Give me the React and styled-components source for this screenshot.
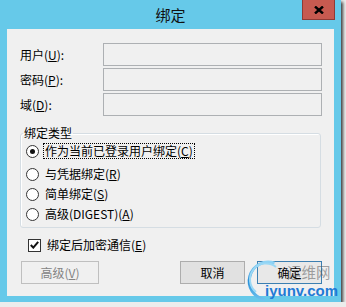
import React from "react";
import styled, { createGlobalStyle } from "styled-components";

const GlobalStyle = createGlobalStyle`
  html, body {
    margin: 0;
    padding: 0;
    background: #ececec;
  }
  body {
    font-family: "Noto Sans CJK SC", "Liberation Sans", sans-serif;
    color: #000;
  }
`;

const Window = styled.div`
  position: relative;
  width: 341px;
  height: 302px;
  background: #66c9e9;
  display: flex;
  flex-direction: column;
  box-shadow: 2px 2px 3px rgba(0, 0, 0, 0.75);
`;

const TitleBar = styled.div`
  height: 29px;
  display: grid;
  grid-template-columns: 1fr auto 1fr;
  align-items: start;
`;

const Title = styled.div`
  grid-column: 2;
  font-size: 15px;
  line-height: 18px;
  margin-top: 6px;
  color: #111;
`;

const CloseButton = styled.div`
  grid-column: 3;
  justify-self: end;
  margin-right: 6px;
  width: 33px;
  height: 20px;
  box-sizing: border-box;
  background: #c75a50;
  border: 1px solid #8f3b35;
  border-top: none;
  display: flex;
  justify-content: center;
  align-items: center;
`;

const Content = styled.div`
  flex: 1;
  margin: 0 7px 6px;
  background: #f0f0f0;
  padding: 14px 12px 0 13px;
  display: flex;
  flex-direction: column;
`;

const FormGrid = styled.div`
  display: grid;
  grid-template-columns: 83px 1fr;
  row-gap: 2px;
  align-items: center;
`;

const Label = styled.label`
  font-size: 12px;
  line-height: 16px;
  padding-left: 0;
`;

const Field = styled.input`
  height: 23px;
  box-sizing: border-box;
  border: 1px solid #adb0b3;
  background: #f0f0f0;
  margin: 0;
  outline: none;
`;

const GroupBox = styled.fieldset`
  margin: 9px 1px 0 0;
  padding: 0 5px 3px 5px;
  border: 1px solid #d5dde3;
  border-radius: 3px;
  box-shadow: inset 1px 1px 0 #fff;
  min-width: 0;
`;

const Legend = styled.legend`
  font-size: 12px;
  line-height: 16px;
  padding: 0 1px;
  margin-left: -3px;
`;

const OptionRow = styled.div`
  display: flex;
  align-items: center;
  height: 20px;
  margin-bottom: ${(p) => p.$gap || 0}px;
`;

const Radio = styled.span`
  width: 13px;
  height: 13px;
  box-sizing: border-box;
  border-radius: 50%;
  border: 1px solid #333;
  background: #fff;
  display: flex;
  justify-content: center;
  align-items: center;

  &::after {
    content: "";
    width: 5px;
    height: 5px;
    border-radius: 50%;
    background: ${(p) => (p.$checked ? "#111" : "transparent")};
  }
`;

const OptionText = styled.span`
  margin-left: 4px;
  padding: 0 1px;
  font-size: 12px;
  line-height: 14px;
  border: 1px dotted ${(p) => (p.$focused ? "#000" : "transparent")};
`;

const CheckRow = styled.div`
  display: flex;
  align-items: center;
  height: 16px;
  margin: 9px 0 0 8px;
`;

const CheckBox = styled.span`
  width: 13px;
  height: 13px;
  box-sizing: border-box;
  border: 1px solid #333;
  background: #fff;
  display: flex;
  justify-content: center;
  align-items: center;
`;

const ButtonRow = styled.div`
  display: flex;
  margin-top: 8px;
  padding-left: 1px;
`;

const Button = styled.div`
  width: ${(p) => p.$w}px;
  height: 23px;
  box-sizing: border-box;
  margin-left: ${(p) => p.$ml || "0"};
  border: 1px solid ${(p) => (p.$default ? "#3c7fb1" : p.$disabled ? "#bfbfbf" : "#adadad")};
  background: ${(p) => (p.$disabled ? "#f0f0f0" : p.$default ? "#e8e8e8" : "#e1e1e1")};
  color: ${(p) => (p.$disabled ? "#838383" : "#000")};
  font-size: 12px;
  display: flex;
  justify-content: center;
  align-items: center;
`;

const Watermark = styled.div`
  position: absolute;
  left: 243px;
  top: 258px;
  width: 100px;
  height: 44px;
  pointer-events: none;
`;

const Swirl = styled.svg`
  position: absolute;
  left: 0;
  top: 0;
`;

const MarkCn = styled.span`
  position: absolute;
  left: 44px;
  top: 5px;
  font-size: 14.5px;
  line-height: 18px;
  color: rgba(90, 90, 90, 0.55);
`;

const MarkEn = styled.span`
  position: absolute;
  left: 22px;
  top: 24px;
  font-family: "Liberation Sans", sans-serif;
  font-weight: bold;
  font-size: 15px;
  line-height: 17px;
  color: #1f7ad6;
`;

const options = [
  { key: "C", text: "作为当前已登录用户绑定", checked: true },
  { key: "R", text: "与凭据绑定" },
  { key: "S", text: "简单绑定" },
  { key: "A", text: "高级(DIGEST)" },
];

const fields = [
  { key: "U", text: "用户" },
  { key: "P", text: "密码" },
  { key: "D", text: "域" },
];

const App = () => {
  return (
    <>
      <GlobalStyle />
      <Window>
        <TitleBar>
          <Title>绑定</Title>
          <CloseButton>
            <svg width="10" height="8" viewBox="0 0 10 8">
              <path d="M1 0.5 L9 7.5 M9 0.5 L1 7.5" stroke="#000" strokeWidth="2.4" />
            </svg>
          </CloseButton>
        </TitleBar>
        <Content>
          <FormGrid>
            {fields.map((f) => (
              <React.Fragment key={f.key}>
                <Label>
                  {f.text}(<u>{f.key}</u>):
                </Label>
                <Field disabled />
              </React.Fragment>
            ))}
          </FormGrid>
          <GroupBox>
            <Legend>绑定类型</Legend>
            {options.map((o, i) => (
              <OptionRow key={o.key} $gap={i === 0 ? 3 : 0}>
                <Radio $checked={o.checked} />
                <OptionText $focused={o.checked}>
                  {o.text}(<u>{o.key}</u>)
                </OptionText>
              </OptionRow>
            ))}
          </GroupBox>
          <CheckRow>
            <CheckBox>
              <svg width="9" height="8" viewBox="0 0 9 8">
                <path d="M0.8 4 L3.3 6.6 L8.2 0.8" stroke="#111" strokeWidth="2" fill="none" />
              </svg>
            </CheckBox>
            <OptionText>
              绑定后加密通信(<u>E</u>)
            </OptionText>
          </CheckRow>
          <ButtonRow>
            <Button $w={78} $disabled>
              高级(<u>V</u>)
            </Button>
            <Button $w={65} $ml="auto">
              取消
            </Button>
            <Button $w={65} $ml="12px" $default>
              确定
            </Button>
          </ButtonRow>
        </Content>
        <Watermark>
          <Swirl width="60" height="44" viewBox="0 0 60 44">
            <defs>
              <linearGradient id="sw" x1="0" y1="0" x2="0" y2="1">
                <stop offset="0" stopColor="#8fd3f5" />
                <stop offset="0.5" stopColor="#2a8fd8" />
                <stop offset="1" stopColor="#6cc2ee" />
              </linearGradient>
            </defs>
            <path d="M31.5 5.1 A19 19 0 1 0 21.7 41.7" stroke="url(#sw)" strokeWidth="3" fill="none" />
            <path d="M33 9 A15 15 0 0 0 13 34" stroke="#9ad8f5" strokeWidth="2" fill="none" />
          </Swirl>
          <MarkCn>运维网</MarkCn>
          <MarkEn>iyunv.com</MarkEn>
        </Watermark>
      </Window>
    </>
  );
};

export default App;
